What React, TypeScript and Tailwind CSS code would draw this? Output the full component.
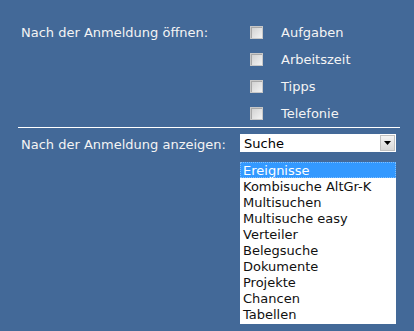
import React from "react";

const options = [
  "Ereignisse",
  "Kombisuche AltGr-K",
  "Multisuchen",
  "Multisuche easy",
  "Verteiler",
  "Belegsuche",
  "Dokumente",
  "Projekte",
  "Chancen",
  "Tabellen",
];

const checks = ["Aufgaben", "Arbeitszeit", "Tipps", "Telefonie"];

function Box() {
  return (
    <div className="w-[13px] h-[13px] border border-[#c8c8c8] bg-gradient-to-br from-[#cfcfcf] to-[#f4f4f4] shadow-[inset_1px_1px_0_#a8a8a8]" />
  );
}

export default function App() {
  return (
    <div className="w-[414px] h-[331px] bg-[#436998] pt-[19px] pl-[18px] font-['DejaVu_Sans',Verdana,sans-serif] text-[13px] leading-none">
      <div className="flex">
        <div className="w-[222px] pl-[3px] h-[27px] flex items-center text-[#f4f4f4]">
          Nach der Anmeldung öffnen:
        </div>
        <div className="flex flex-col">
          {checks.map((c) => (
            <div key={c} className="h-[27px] flex items-center pl-[10px]">
              <Box />
              <span className="ml-[18px] text-[#f4f4f4]">{c}</span>
            </div>
          ))}
        </div>
      </div>
      <div className="w-[382px] h-px bg-white" />
      <div className="flex items-center mt-[6px]">
        <div className="w-[222px] pl-[3px] text-[#f4f4f4] pt-[3px]">Nach der Anmeldung anzeigen:</div>
        <div className="w-[156px] h-[18px] bg-white flex items-center justify-between">
          <span className="pl-[4px] text-black">Suche</span>
          <div className="w-[15px] h-[16px] mr-[1px] bg-gradient-to-b from-[#f4f4f4] to-[#d8d8d8] border border-[#c0c0c0] flex items-center justify-center">
            <svg width="7" height="4" viewBox="0 0 7 4">
              <path d="M0 0 H7 L3.5 4 Z" fill="#000" />
            </svg>
          </div>
        </div>
      </div>
      <div className="ml-[222px] mt-[10px] w-[156px] bg-white pb-[2px]">
        {options.map((o, i) => (
          <div
            key={o}
            className={
              "h-[16px] pl-[3px] flex items-center " +
              (i === 0
                ? "bg-[#3399ff] text-white outline outline-1 outline-dotted outline-[#7fbfff] -outline-offset-1"
                : "text-[#111]")
            }
          >
            {o}
          </div>
        ))}
      </div>
    </div>
  );
}
